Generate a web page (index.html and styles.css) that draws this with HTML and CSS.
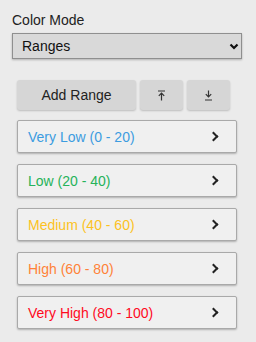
FILE: index.html
```html
<!DOCTYPE html>
<html lang="en">

<head>
    <meta charset="UTF-8">
    <meta name="viewport" content="width=device-width, initial-scale=1.0">
    <title>Color Mode</title>
    <link rel="stylesheet" href="styles.css">
</head>

<body>
    <div class="panel">
        <label class="label" for="mode">Color Mode</label>
        <div class="select-wrap">
            <select id="mode" class="select">
                <option>Ranges</option>
            </select>
            <svg class="select-arrow" width="10" height="7" viewBox="0 0 10 7">
                <path d="M1.5 1.5 L5 5 L8.5 1.5" fill="none" stroke="#111" stroke-width="2.2" />
            </svg>
        </div>

        <div class="toolbar">
            <button class="btn btn-add">Add Range</button>
            <button class="btn btn-icon" title="Move to top">
                <svg width="9" height="11" viewBox="0 0 9 11">
                    <path d="M1 1 H8" stroke="#333" stroke-width="1" />
                    <path d="M4.5 3 V10.5 M1.8 5.8 L4.5 3 L7.2 5.8" fill="none" stroke="#333" stroke-width="1.2" />
                </svg>
            </button>
            <button class="btn btn-icon" title="Move to bottom">
                <svg width="9" height="11" viewBox="0 0 9 11">
                    <path d="M4.5 0.5 V7 M1.8 4.2 L4.5 7 L7.2 4.2" fill="none" stroke="#333" stroke-width="1.2" />
                    <path d="M1 10 H8" stroke="#333" stroke-width="1" />
                </svg>
            </button>
        </div>

        <div class="ranges">
            <div class="range very-low"><span>Very Low (0 - 20)</span><i class="chev"></i></div>
            <div class="range low"><span>Low (20 - 40)</span><i class="chev"></i></div>
            <div class="range medium"><span>Medium (40 - 60)</span><i class="chev"></i></div>
            <div class="range high"><span>High (60 - 80)</span><i class="chev"></i></div>
            <div class="range very-high"><span>Very High (80 - 100)</span><i class="chev"></i></div>
        </div>
    </div>
</body>

</html>
```

FILE: styles.css
```css
body {
    margin: 0;
    background-color: #ebebeb;
    font-family: "Liberation Sans", Arial, sans-serif;
    font-size: 14px;
    color: #222;
}

.panel {
    padding: 12px 14px 12px 12px;
}

.label {
    display: block;
    line-height: 16px;
    color: #222;
}

.select-wrap {
    position: relative;
    margin-top: 5px;
}

.select {
    display: block;
    width: 230px;
    height: 26px;
    margin: 0;
    padding: 0 0 0 9px;
    border: 1px solid #8f8f8f;
    border-radius: 0;
    background-color: #d9d9d9;
    color: #111;
    font-family: "Liberation Sans", Arial, sans-serif;
    font-size: 14px;
    appearance: none;
    -webkit-appearance: none;
    box-shadow: 0 1px 2px rgba(0, 0, 0, 0.25);
}

.select-arrow {
    position: absolute;
    right: 3px;
    top: 10px;
}

.toolbar {
    display: flex;
    gap: 4px;
    margin: 21px 0 0 5px;
}

.btn {
    height: 30px;
    padding: 0;
    border: none;
    border-radius: 3px;
    background-color: #d6d6d6;
    color: #222;
    font-family: "Liberation Sans", Arial, sans-serif;
    font-size: 14px;
    box-shadow: 0 1px 2px rgba(0, 0, 0, 0.2);
    cursor: pointer;
}

.btn-add {
    width: 119px;
}

.btn-icon {
    width: 43px;
    display: flex;
    align-items: center;
    justify-content: center;
}

.ranges {
    display: flex;
    flex-direction: column;
    gap: 11px;
    margin: 10px 0 0 5px;
}

.range {
    display: flex;
    align-items: center;
    justify-content: space-between;
    width: 220px;
    height: 33px;
    box-sizing: border-box;
    padding: 0 19px 0 10px;
    border: 1px solid #a9a9a9;
    border-radius: 2px;
    background-color: #f0f0f0;
    box-shadow: 0 1px 2px rgba(0, 0, 0, 0.25);
}

.chev {
    width: 5px;
    height: 5px;
    border-top: 2px solid #222;
    border-right: 2px solid #222;
    transform: rotate(45deg);
}

.very-low { color: #3c9ce0; }
.low { color: #26b35a; }
.medium { color: #fcc21f; }
.high { color: #ff8238; }
.very-high { color: #ff0a1e; }
```
